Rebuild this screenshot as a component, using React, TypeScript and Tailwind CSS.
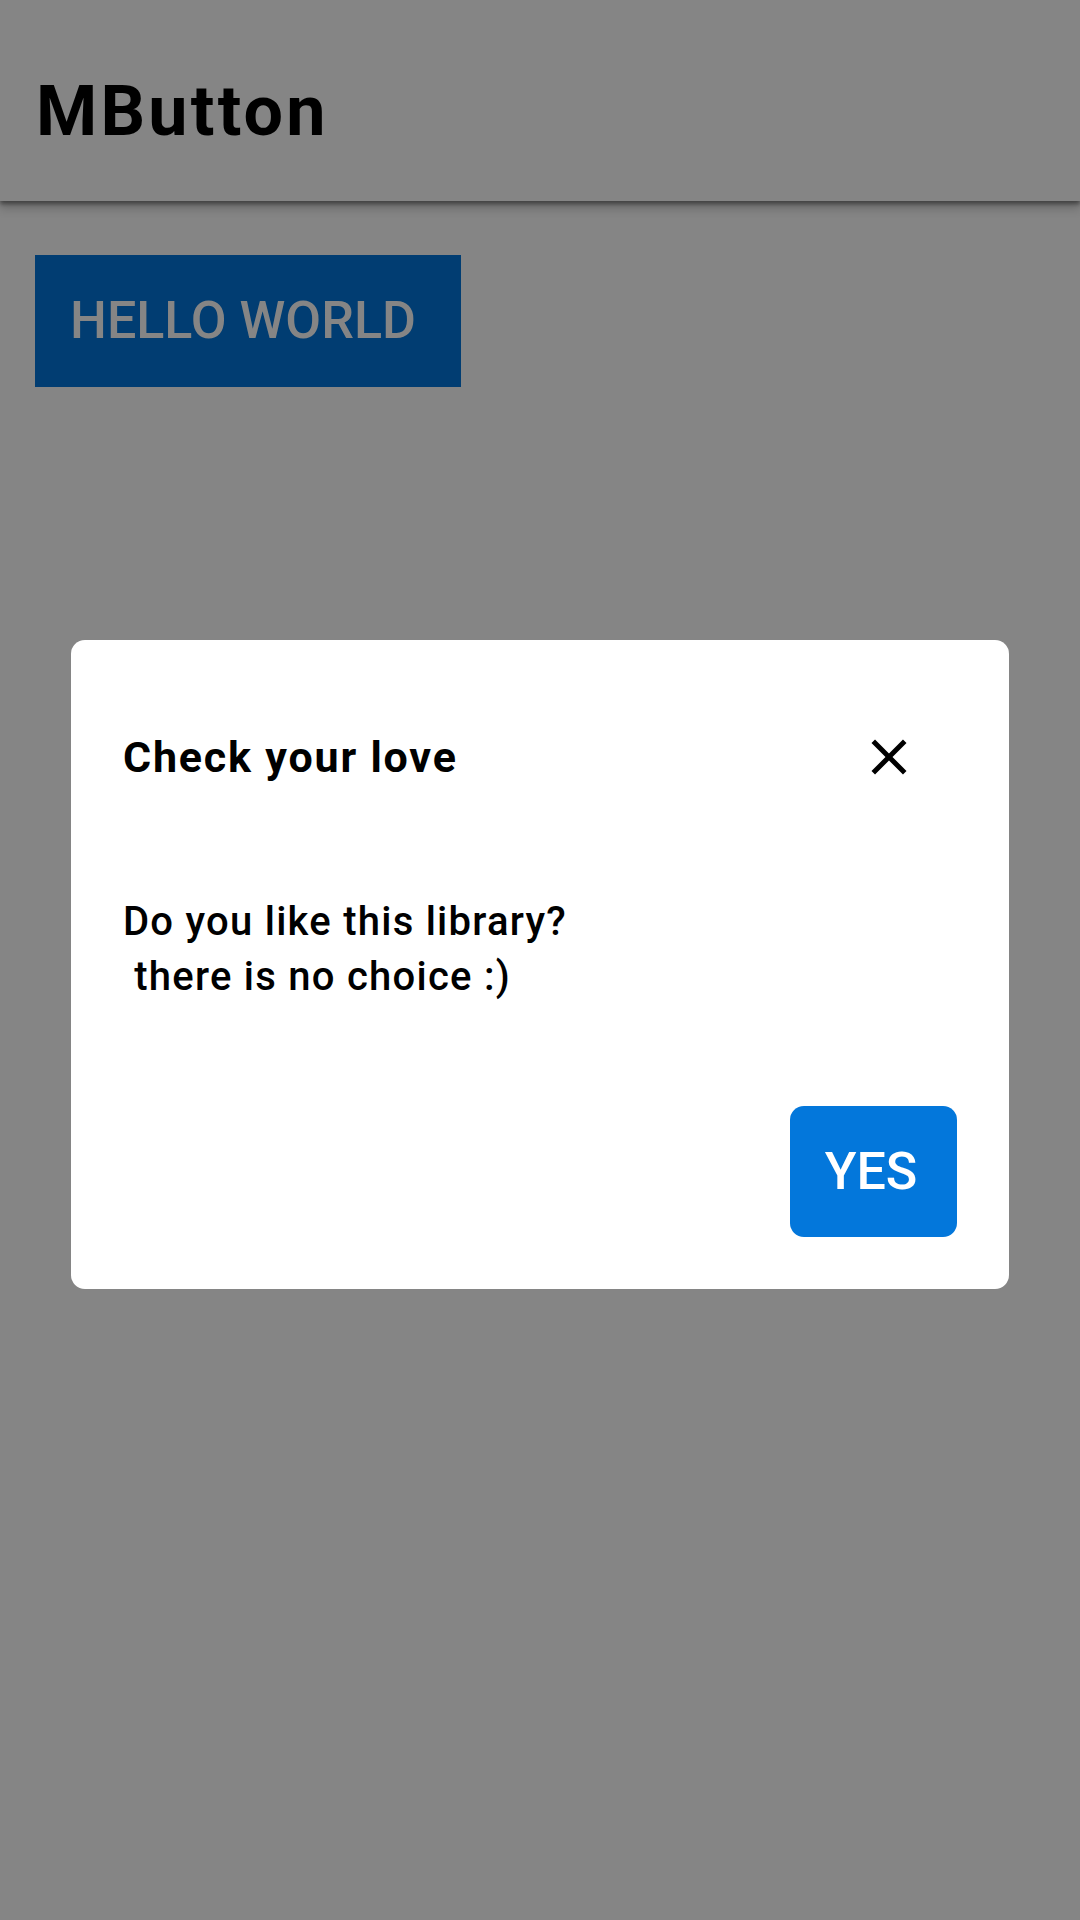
import React from "react";

export default function App() {
  return (
    <div
      className="relative w-[1080px] h-[1920px] bg-[#858585] overflow-hidden"
      style={{ fontFamily: "Roboto, 'Noto Sans', sans-serif" }}
    >
      <header className="h-[201px] bg-[#858585] flex items-center pl-[36px] shadow-[0_3px_4px_rgba(0,0,0,0.4),0_8px_9px_rgba(0,0,0,0.18)] relative z-10">
        <h1 className="text-[70px] font-bold text-black leading-none mt-[20px] tracking-[3.2px]">MButton</h1>
      </header>
      <div className="pt-[54px] pl-[35px]">
        <button className="w-[426px] h-[132px] bg-[#013d72] text-[#858585] text-[52px] font-medium flex items-center justify-start pl-[35px]">
          HELLO WORLD
        </button>
      </div>

      <div className="absolute inset-0 z-20 flex items-start justify-center pt-[640px]">
        <div className="w-[938px] h-[649px] bg-white rounded-[14px] px-[52px] pt-[52px] pb-[52px] flex flex-col">
          <div className="h-[130px] flex items-center justify-between">
            <h2 className="text-[43px] font-bold text-black leading-none tracking-[1.8px]">Check your love</h2>
            <button className="w-[60px] h-[60px] mr-[38px] flex items-center justify-center">
              <svg width="60" height="60" viewBox="0 0 24 24" fill="black">
                <path d="M19 6.41L17.59 5 12 10.59 6.41 5 5 6.41 10.59 12 5 17.59 6.41 19 12 13.41 17.59 19 19 17.59 13.41 12z" />
              </svg>
            </button>
          </div>
          <p className="mt-[72px] text-[40px] font-medium text-black leading-[55px] whitespace-pre tracking-[1.25px]">
            {"Do you like this library?\n there is no choice :)"}
          </p>
          <div className="flex-1" />
          <div className="flex justify-end">
            <button className="w-[167px] h-[131px] bg-[#0377db] rounded-[14px] text-white text-[52px] font-medium flex items-center justify-center pr-[5px]">
              YES
            </button>
          </div>
        </div>
      </div>
    </div>
  );
}
